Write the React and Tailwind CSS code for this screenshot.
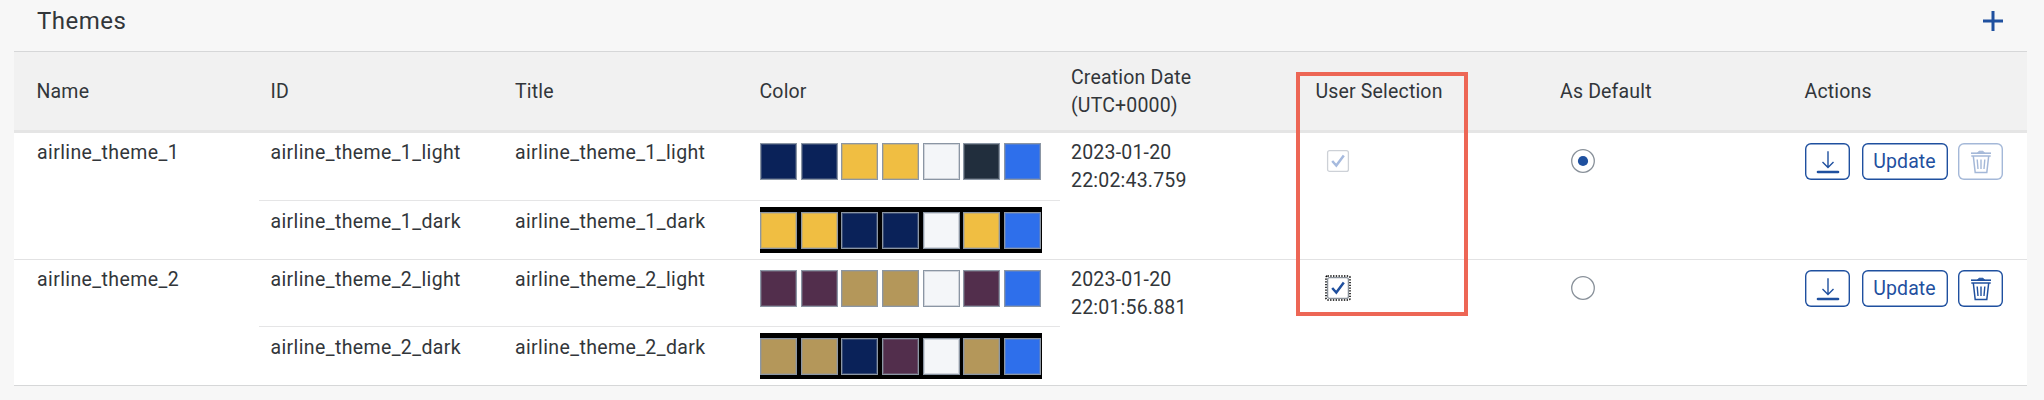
import { Fragment } from "react";

const COLS = "grid-cols-[245px_244.5px_244.5px_311.5px_244.5px_245px_244px_234px]";

const NAVY = "bg-[#0a2259]";
const GOLD = "bg-[#f0be42]";
const PALE = "bg-[#f4f6f9]";
const SLATE = "bg-[#212e3d]";
const BLUE = "bg-[#2e6feb]";
const PLUM = "bg-[#522e4c]";
const TAN = "bg-[#b4975a]";

const THEMES = [
  {
    name: "airline_theme_1",
    rows: "grid-rows-[68px_58px]",
    light: [NAVY, NAVY, GOLD, GOLD, PALE, SLATE, BLUE],
    dark: [GOLD, GOLD, NAVY, NAVY, PALE, GOLD, BLUE],
    time: "22:02:43.759",
    isDefault: true,
    border: "border-[#e2e2e3]",
  },
  {
    name: "airline_theme_2",
    rows: "grid-rows-[67px_58px]",
    light: [PLUM, PLUM, TAN, TAN, PALE, PLUM, BLUE],
    dark: [TAN, TAN, NAVY, PLUM, PALE, TAN, BLUE],
    time: "22:01:56.881",
    isDefault: false,
    border: "border-[#d6d7d8]",
  },
];

function Swatches({ colors }) {
  return (
    <div className="flex gap-[3.7px]">
      {colors.map((c, i) => (
        <span
          key={i}
          className={`h-[37px] w-[37px] shrink-0 border border-[#8b96a4] shadow-[inset_0_0_0_1px_rgba(139,150,164,0.35)] ${c}`}
        />
      ))}
    </div>
  );
}

function Checkbox({ locked }) {
  return (
    <svg viewBox="0 0 26 26" className="ml-[11px] mt-[15px] h-[26px] w-[26px]" fill="none">
      {!locked && <rect x="1" y="1" width="24" height="24" rx="1.5" stroke="#000" strokeWidth="1.6" strokeDasharray="1.4 1.35" />}
      <rect x="2.6" y="2.6" width="20.8" height="20.8" rx="2" fill="#fff" stroke={locked ? "#cdd1d7" : "#89919a"} strokeWidth="1.3" />
      <path d="M7.2 13 11.3 17.5 18.8 7.4" stroke={locked ? "#a6bade" : "#1f4f9e"} strokeWidth="2.5" />
    </svg>
  );
}

function Radio({ checked }) {
  return (
    <svg viewBox="0 0 24 24" className="ml-[11px] mt-4 h-6 w-6" fill="none">
      <circle cx="12" cy="12" r="11.3" stroke="#89919a" strokeWidth="1.3" />
      {checked && <circle cx="12" cy="12" r="5.1" fill="#1f509f" />}
    </svg>
  );
}

function DownloadIcon() {
  return (
    <svg viewBox="0 0 24 24" className="h-6 w-6" fill="none" stroke="currentColor">
      <path d="M12 1.2V17.5M6.5 12 12 17.5 17.5 12" strokeWidth="1.4" />
      <path d="M2 22H22" strokeWidth="2.6" strokeLinecap="round" />
    </svg>
  );
}

function TrashIcon() {
  return (
    <svg viewBox="0 0 24 24" className="h-6 w-6" fill="none" stroke="currentColor" strokeWidth="1.5">
      <path d="M2 3.2H22" strokeWidth="1.6" />
      <path d="M8.5 2.8 10 1.2H14L15.5 2.8Z" fill="currentColor" strokeWidth="0.8" />
      <path d="M2.3 6H21.7" />
      <path d="M4.3 6 6.2 22.6H17.8L19.7 6" />
      <path d="M8.2 9.5 9 19M12 9.5V19M15.8 9.5 15 19" strokeWidth="1.4" />
    </svg>
  );
}

function Button({ width, disabled, children }) {
  return (
    <button
      className={`flex h-[37px] shrink-0 items-center justify-center rounded-md text-[#1f509f] shadow-[inset_0_0_0_1.4px_#1f509f] ${width} ${disabled ? "opacity-40" : ""}`}
    >
      {children}
    </button>
  );
}

function ThemeRow({ theme }) {
  const variants = [
    ["light", theme.light],
    ["dark", theme.dark],
  ];
  return (
    <div className={`grid border-b ${COLS} ${theme.rows} ${theme.border}`}>
      <div className="row-span-2 pl-[23px] pt-1.5 tracking-[0.4px]">{theme.name}</div>
      {variants.map(([kind, colors]) => {
        const cell =
          kind === "light"
            ? "row-start-1 border-b border-[#e5e5e6] pl-[11.5px] pt-1.5 tracking-[0.38px]"
            : "row-start-2 pl-[11.5px] pt-[7px] tracking-[0.38px]";
        return (
          <Fragment key={kind}>
            <div className={`col-start-2 ${cell}`}>{`${theme.name}_${kind}`}</div>
            <div className={`col-start-3 ${cell}`}>{`${theme.name}_${kind}`}</div>
            {kind === "light" ? (
              <div className="col-start-4 row-start-1 border-b border-[#e5e5e6] pl-3 pt-2.5">
                <Swatches colors={colors} />
              </div>
            ) : (
              <div className="col-start-4 row-start-2 pl-3 pt-1.5">
                <div className="flex h-[46px] w-[282px] items-center bg-black">
                  <Swatches colors={colors} />
                </div>
              </div>
            )}
          </Fragment>
        );
      })}
      <div className="col-start-5 row-span-2 row-start-1 pl-[11.5px] pt-1.5 tracking-[0.2px]">
        2023-01-20
        <br />
        {theme.time}
      </div>
      <div className="col-start-6 row-span-2 row-start-1 pl-[10px]">
        <Checkbox locked={theme.isDefault} />
      </div>
      <div className="col-start-7 row-span-2 row-start-1 pl-[11px]">
        <Radio checked={theme.isDefault} />
      </div>
      <div className="col-start-8 row-span-2 row-start-1 flex pl-3 pt-2.5">
        <Button width="w-[45px]">
          <DownloadIcon />
        </Button>
        <div className="ml-[11.5px] mr-[10.5px] flex">
          <Button width="w-[86px]">
            <span className="tracking-[0.1px]">Update</span>
          </Button>
        </div>
        <Button width="w-[45px]" disabled={theme.isDefault}>
          <TrashIcon />
        </Button>
      </div>
    </div>
  );
}

export default function App() {
  return (
    <div className="relative h-[400px] w-[2044px] overflow-hidden bg-[#f7f7f7] pl-3.5 font-[Roboto,sans-serif] text-[19.5px] leading-7 text-[#32363a]">
      <div className="flex h-[51px] w-[2013px] items-start justify-between pl-[23px] pr-6">
        <h1 className="pt-[5px] text-2xl leading-8 tracking-[0.5px]">Themes</h1>
        <svg viewBox="0 0 20 20" className="mt-[11px] h-5 w-5" stroke="#1f509f" strokeWidth="3">
          <path d="M10 0V20M0 10H20" />
        </svg>
      </div>
      <div className="w-[2013px] border-t border-[#d6d7d8] bg-white">
        <div className={`grid h-[81px] items-center border-b-[3px] border-[#e5e5e5] bg-[#f1f1f1] pt-0.5 tracking-[0.17px] ${COLS}`}>
          <div className="pl-[22.5px]">Name</div>
          <div className="pl-[11.5px]">ID</div>
          <div className="pl-[11.5px]">Title</div>
          <div className="pl-[11.5px]">Color</div>
          <div className="pl-[11.5px]">
            Creation Date
            <br />
            (UTC+0000)
          </div>
          <div className="pl-[11.5px]">User Selection</div>
          <div className="pl-[11px]">As Default</div>
          <div className="pl-[11.5px]">Actions</div>
        </div>
        {THEMES.map((t) => (
          <ThemeRow key={t.name} theme={t} />
        ))}
      </div>
      <div className="pointer-events-none absolute left-[1296px] top-[72px] h-[244px] w-[172px] border-4 border-[#ed6655]" />
    </div>
  );
}
